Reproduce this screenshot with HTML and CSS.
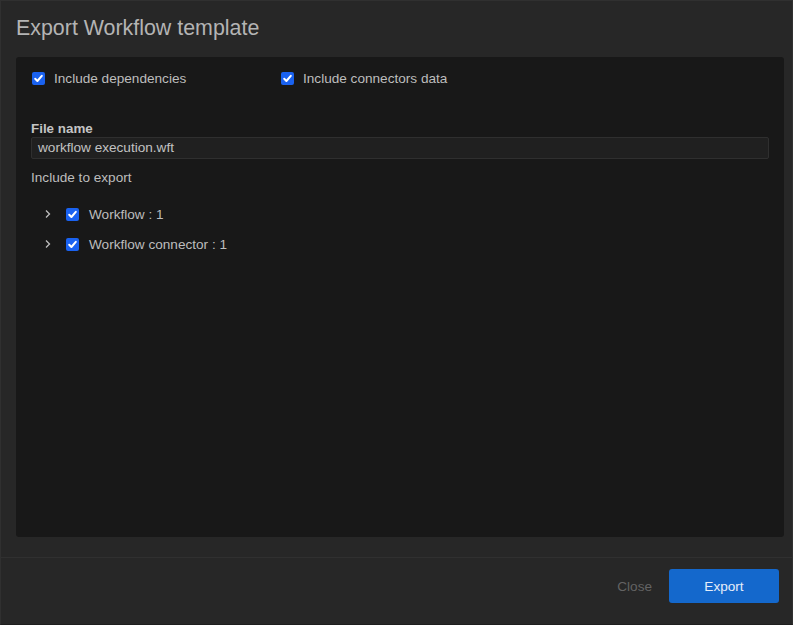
FILE: index.html
```html
<!DOCTYPE html>
<html>
<head>
<meta charset="utf-8">
<link rel="stylesheet" href="styles.css">
</head>
<body>
<div class="dialog">
  <div class="header">Export Workflow template</div>
  <div class="panel">
    <div class="options">
      <label class="opt opt-first"><span class="cb"><svg viewBox="0 0 13 13"><path d="M3.2 6.8 L5.4 9 L9.8 3.8" /></svg></span>Include dependencies</label>
      <label class="opt"><span class="cb"><svg viewBox="0 0 13 13"><path d="M3.2 6.8 L5.4 9 L9.8 3.8" /></svg></span>Include connectors data</label>
    </div>
    <div class="field-label">File name</div>
    <div class="input">workflow execution.wft</div>
    <div class="section-label">Include to export</div>
    <div class="tree">
      <div class="tree-row">
        <svg class="chev" viewBox="0 0 8 10"><path d="M2 1.5 L5.5 5 L2 8.5" /></svg>
        <span class="cb"><svg viewBox="0 0 13 13"><path d="M3.2 6.8 L5.4 9 L9.8 3.8" /></svg></span>
        <span class="tree-label">Workflow : 1</span>
      </div>
      <div class="tree-row">
        <svg class="chev" viewBox="0 0 8 10"><path d="M2 1.5 L5.5 5 L2 8.5" /></svg>
        <span class="cb"><svg viewBox="0 0 13 13"><path d="M3.2 6.8 L5.4 9 L9.8 3.8" /></svg></span>
        <span class="tree-label">Workflow connector : 1</span>
      </div>
    </div>
  </div>
  <div class="footer">
    <span class="btn-close">Close</span>
    <span class="btn-export">Export</span>
  </div>
</div>
</body>
</html>
```
FILE: styles.css
```css
html, body {
  margin: 0;
  padding: 0;
  background: #262626;
}
body {
  font-family: "Liberation Sans", Arial, sans-serif;
  width: 793px;
  height: 625px;
  overflow: hidden;
}
.dialog {
  box-sizing: border-box;
  width: 793px;
  height: 625px;
  background: #272727;
  border: 1px solid #303030;
  border-bottom-color: #1e1e1e;
  display: flex;
  flex-direction: column;
}
.header {
  height: 56px;
  box-sizing: border-box;
  padding: 15px 0 0 15px;
  font-size: 21.4px;
  color: #b4b4b4;
  line-height: 25px;
}
.panel {
  margin: 0 8px 0 15px;
  height: 480px;
  background: #181818;
  border-radius: 3px;
  box-sizing: border-box;
  padding: 12px 15px 0 15px;
}
.options {
  display: flex;
  align-items: center;
  height: 18px;
}
.opt {
  display: flex;
  align-items: center;
  font-size: 13.6px;
  color: #bdbdbd;
}
.opt-first {
  width: 249px;
  padding-left: 1px;
}
.cb {
  width: 13px;
  height: 13px;
  background: #1a62f0;
  border-radius: 2px;
  display: inline-flex;
  margin-right: 9px;
  flex: none;
}
.cb svg {
  width: 13px;
  height: 13px;
  fill: none;
  stroke: #fff;
  stroke-width: 2;
  stroke-linecap: round;
  stroke-linejoin: round;
}
.field-label {
  margin-top: 34px;
  font-size: 13.4px;
  font-weight: bold;
  color: #c4c4c4;
  line-height: 16px;
}
.input {
  margin-top: 0;
  height: 22px;
  box-sizing: border-box;
  border: 1px solid #2f2f2f;
  background: #202020;
  border-radius: 2px;
  padding: 0 6px;
  font-size: 13.6px;
  line-height: 20px;
  color: #c2c2c2;
}
.section-label {
  margin-top: 11px;
  font-size: 13.6px;
  color: #bdbdbd;
  line-height: 16px;
}
.tree {
  margin-top: 18px;
  padding-left: 13px;
  display: flex;
  flex-direction: column;
  gap: 10px;
}
.tree-row {
  display: flex;
  align-items: center;
  height: 20px;
}
.chev {
  width: 8px;
  height: 10px;
  fill: none;
  stroke: #bdbdbd;
  stroke-width: 1.3;
  margin-right: 14px;
}
.tree-row .cb {
  margin-right: 10px;
}
.tree-label {
  font-size: 13.6px;
  color: #bdbdbd;
}
.footer {
  margin-top: 20px;
  border-top: 1px solid #303030;
  flex: 1;
  display: flex;
  align-items: center;
  justify-content: flex-end;
  padding: 0 13px 10px 0;
}
.btn-close {
  font-size: 13.6px;
  color: #636363;
  margin-right: 17px;
}
.btn-export {
  width: 110px;
  height: 34px;
  background: #1468cc;
  border-radius: 3px;
  color: #e6eefa;
  font-size: 13.6px;
  display: flex;
  align-items: center;
  justify-content: center;
}
```
